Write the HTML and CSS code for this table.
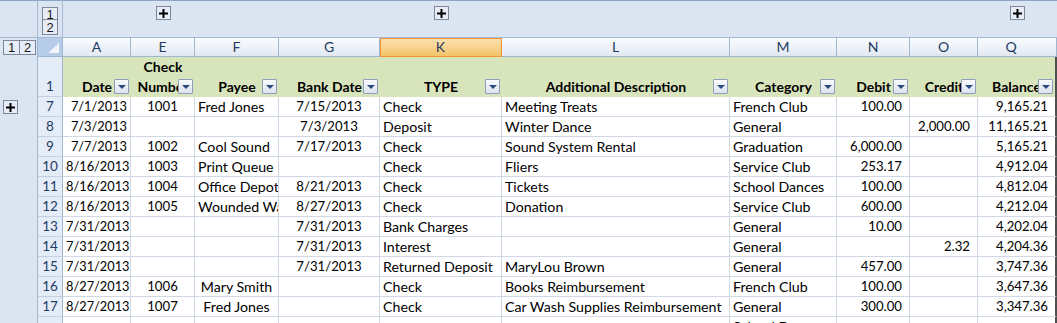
FILE: index.html
```html
<!DOCTYPE html>
<html>
<head>
<meta charset="utf-8">
<link rel="stylesheet" href="styles.css">
</head>
<body>
<div class="sheet">
  <!-- top outline band -->
  <div class="tb corner"></div>
  <div class="tb lvl"><div class="btn lv1">1</div><div class="btn lv2">2</div></div>
  <div class="tb grp"></div>
  <div class="tb grp"><div class="btn plus"><svg width="9" height="9" viewBox="0 0 9 9"><path d="M3.5 0h2v3.5H9v2H5.5V9h-2V5.5H0v-2h3.5z" fill="#000"/></svg></div></div>
  <div class="tb grp"></div>
  <div class="tb grp"></div>
  <div class="tb grp"><div class="btn plus"><svg width="9" height="9" viewBox="0 0 9 9"><path d="M3.5 0h2v3.5H9v2H5.5V9h-2V5.5H0v-2h3.5z" fill="#000"/></svg></div></div>
  <div class="tb grp"></div>
  <div class="tb grp"></div>
  <div class="tb grp"></div>
  <div class="tb grp"></div>
  <div class="tb grp"><div class="btn plus"><svg width="9" height="9" viewBox="0 0 9 9"><path d="M3.5 0h2v3.5H9v2H5.5V9h-2V5.5H0v-2h3.5z" fill="#000"/></svg></div></div>

  <!-- column headers -->
  <div class="ol lvrow"><div class="btn hl">1</div><div class="btn hl hl2">2</div></div>
  <div class="ch corner"></div>
  <div class="ch">A</div>
  <div class="ch">E</div>
  <div class="ch">F</div>
  <div class="ch">G</div>
  <div class="ch sel">K</div>
  <div class="ch">L</div>
  <div class="ch">M</div>
  <div class="ch">N</div>
  <div class="ch">O</div>
  <div class="ch qh">Q</div>

  <!-- header row 1 -->
  <div class="ol"></div>
  <div class="rh tall">1</div>
  <div class="hd"><span>Date</span><i class="dd"></i></div>
  <div class="hd"><span>Check Number</span><i class="dd"></i></div>
  <div class="hd"><span>Payee</span><i class="dd"></i></div>
  <div class="hd"><span>Bank Date</span><i class="dd"></i></div>
  <div class="hd"><span>TYPE</span><i class="dd"></i></div>
  <div class="hd"><span>Additional Description</span><i class="dd"></i></div>
  <div class="hd"><span>Category</span><i class="dd"></i></div>
  <div class="hd"><span>Debit</span><i class="dd"></i></div>
  <div class="hd"><span>Credit</span><i class="dd"></i></div>
  <div class="hd edge"><span>Balance</span><i class="dd"></i></div>

  <!-- row 7 -->
  <div class="ol"><div class="btn plus side"><svg width="9" height="9" viewBox="0 0 9 9"><path d="M3.5 0h2v3.5H9v2H5.5V9h-2V5.5H0v-2h3.5z" fill="#000"/></svg></div></div>
  <div class="rh">7</div>
  <div class="c r">7/1/2013</div><div class="c m d">1001</div><div class="c">Fred Jones</div><div class="c m d">7/15/2013</div>
  <div class="c">Check</div><div class="c">Meeting Treats</div><div class="c">French Club</div>
  <div class="c n">100.00</div><div class="c n"></div><div class="c n edge">9,165.21</div>

  <!-- row 8 -->
  <div class="ol"></div><div class="rh">8</div>
  <div class="c r">7/3/2013</div><div class="c m d"></div><div class="c"></div><div class="c m d">7/3/2013</div>
  <div class="c">Deposit</div><div class="c">Winter Dance</div><div class="c">General</div>
  <div class="c n"></div><div class="c n">2,000.00</div><div class="c n edge">11,165.21</div>

  <!-- row 9 -->
  <div class="ol"></div><div class="rh">9</div>
  <div class="c r">7/7/2013</div><div class="c m d">1002</div><div class="c">Cool Sound</div><div class="c m d">7/17/2013</div>
  <div class="c">Check</div><div class="c">Sound System Rental</div><div class="c">Graduation</div>
  <div class="c n">6,000.00</div><div class="c n"></div><div class="c n edge">5,165.21</div>

  <!-- row 10 -->
  <div class="ol"></div><div class="rh">10</div>
  <div class="c r">8/16/2013</div><div class="c m d">1003</div><div class="c">Print Queue</div><div class="c m d"></div>
  <div class="c">Check</div><div class="c">Fliers</div><div class="c">Service Club</div>
  <div class="c n">253.17</div><div class="c n"></div><div class="c n edge">4,912.04</div>

  <!-- row 11 -->
  <div class="ol"></div><div class="rh">11</div>
  <div class="c r">8/16/2013</div><div class="c m d">1004</div><div class="c">Office Depot</div><div class="c m d">8/21/2013</div>
  <div class="c">Check</div><div class="c">Tickets</div><div class="c">School Dances</div>
  <div class="c n">100.00</div><div class="c n"></div><div class="c n edge">4,812.04</div>

  <!-- row 12 -->
  <div class="ol"></div><div class="rh">12</div>
  <div class="c r">8/16/2013</div><div class="c m d">1005</div><div class="c">Wounded Warrior</div><div class="c m d">8/27/2013</div>
  <div class="c">Check</div><div class="c">Donation</div><div class="c">Service Club</div>
  <div class="c n">600.00</div><div class="c n"></div><div class="c n edge">4,212.04</div>

  <!-- row 13 -->
  <div class="ol"></div><div class="rh">13</div>
  <div class="c r">7/31/2013</div><div class="c m d"></div><div class="c"></div><div class="c m d">7/31/2013</div>
  <div class="c">Bank Charges</div><div class="c"></div><div class="c">General</div>
  <div class="c n">10.00</div><div class="c n"></div><div class="c n edge">4,202.04</div>

  <!-- row 14 -->
  <div class="ol"></div><div class="rh">14</div>
  <div class="c r">7/31/2013</div><div class="c m d"></div><div class="c"></div><div class="c m d">7/31/2013</div>
  <div class="c">Interest</div><div class="c"></div><div class="c">General</div>
  <div class="c n"></div><div class="c n">2.32</div><div class="c n edge">4,204.36</div>

  <!-- row 15 -->
  <div class="ol"></div><div class="rh">15</div>
  <div class="c r">7/31/2013</div><div class="c m d"></div><div class="c"></div><div class="c m d">7/31/2013</div>
  <div class="c">Returned Deposit</div><div class="c">MaryLou Brown</div><div class="c">General</div>
  <div class="c n">457.00</div><div class="c n"></div><div class="c n edge">3,747.36</div>

  <!-- row 16 -->
  <div class="ol"></div><div class="rh">16</div>
  <div class="c r">8/27/2013</div><div class="c m d">1006</div><div class="c m">Mary Smith</div><div class="c m d"></div>
  <div class="c">Check</div><div class="c">Books Reimbursement</div><div class="c">French Club</div>
  <div class="c n">100.00</div><div class="c n"></div><div class="c n edge">3,647.36</div>

  <!-- row 17 -->
  <div class="ol"></div><div class="rh">17</div>
  <div class="c r">8/27/2013</div><div class="c m d">1007</div><div class="c m">Fred Jones</div><div class="c m d"></div>
  <div class="c">Check</div><div class="c">Car Wash Supplies Reimbursement</div><div class="c">General</div>
  <div class="c n">300.00</div><div class="c n"></div><div class="c n edge">3,347.36</div>

  <!-- row 18 (cut off) -->
  <div class="ol"></div><div class="rh"></div>
  <div class="c r"></div><div class="c m d"></div><div class="c"></div><div class="c m d"></div>
  <div class="c"></div><div class="c"></div><div class="c">School Dances</div>
  <div class="c n"></div><div class="c n"></div><div class="c n edge"></div>
</div>
</body>
</html>
```
FILE: styles.css
```css
html, body {
  margin: 0;
  padding: 0;
  background: #ffffff;
  overflow: hidden;
}

body {
  font-family: Lato, "Liberation Sans", sans-serif;
  font-size: 14.2px;
  color: #000;
}

.sheet {
  display: grid;
  grid-template-columns: 38px 25px 68px 64px 84px 101px 122px 228px 107px 73px 68px 79px;
  grid-template-rows: 38px 19px 40px;
  grid-auto-rows: 20px;
  width: 1057px;
}

.sheet > div {
  box-sizing: border-box;
  min-width: 0;
}

/* top outline band */
.tb {
  background: #dbe5f1;
  border-top: 1px solid #8ea5c2;
  border-bottom: 1px solid #a5b9d3;
}

.tb.corner {
  border-right: 1px solid #a5b9d3;
}

.tb.lvl {
  border-right: 1px solid #a5b9d3;
  display: flex;
  flex-direction: column;
  align-items: center;
  padding-top: 6px;
}

.tb.grp {
  display: flex;
  justify-content: center;
  padding-top: 5px;
}

.btn {
  box-sizing: border-box;
  border: 1px solid #7c8899;
  background: #e6edf7;
  display: flex;
  align-items: center;
  justify-content: center;
  font-family: "Liberation Sans", Arial, sans-serif;
  font-size: 13px;
  color: #1a1a1a;
  line-height: 1;
}

.lv1 {
  width: 16px;
  height: 13px;
  padding-top: 1px;
}

.lv2 {
  width: 16px;
  height: 16px;
  margin-top: -1px;
}

.plus {
  width: 15px;
  height: 14px;
}

.plus.side {
  margin: 3px 0 0 3px;
}

/* outline column */
.ol {
  background: #dbe5f1;
  border-right: 1px solid #9eb6ce;
}

.ol.lvrow {
  display: flex;
  padding: 2px 0 0 3px;
}

.hl {
  width: 17px;
  height: 15px;
}

.hl2 {
  margin-left: -1px;
}

/* column headers */
.ch {
  background: linear-gradient(to bottom, #f9fbfd 0%, #eef2f8 50%, #e1e8f2 100%);
  border-right: 1px solid #9eb6ce;
  border-bottom: 1px solid #9eb6ce;
  color: #1f3b62;
  font-size: 14px;
  line-height: 18px;
  text-align: center;
}

.ch.corner {
  background:
    linear-gradient(135deg, transparent 50%, #f2f5fa 50%) right 3px bottom 3px / 10px 10px no-repeat,
    #b7cce9;
}

.ch.sel {
  background: linear-gradient(to bottom, #fbe2b2 0%, #f8d491 50%, #f2c267 100%);
  border-right-color: #f29436;
  border-bottom-color: #f29436;
  box-shadow: inset 1px 1px 0 #f29436;
}

.ch.qh {
  padding-right: 12px;
}

/* row headers */
.rh {
  background: #e4ecf7;
  border-right: 1px solid #9eb6ce;
  border-bottom: 1px solid #c3d1e3;
  color: #1f3b62;
  text-align: center;
  font-size: 13.5px;
  line-height: 19px;
}

.rh.tall {
  display: flex;
  align-items: flex-end;
  justify-content: center;
  line-height: 20px;
}

/* table header row */
.hd {
  position: relative;
  background: #d8e4bc;
  font-weight: bold;
  font-size: 14px;
  line-height: 20px;
  display: flex;
  align-items: flex-end;
  justify-content: center;
  text-align: center;
  overflow: hidden;
  white-space: normal;
}

.hd span {
  display: block;
}

.dd {
  position: absolute;
  right: 2px;
  bottom: 3px;
  width: 15px;
  height: 15px;
  box-sizing: border-box;
  border: 1px solid #8d9fba;
  border-radius: 1px;
  background: linear-gradient(to bottom, #f8fafc, #dce3ed);
}

.dd::after {
  content: "";
  position: absolute;
  left: 3px;
  top: 5px;
  border-left: 4px solid transparent;
  border-right: 4px solid transparent;
  border-top: 4px solid #2b4a7e;
}

/* data cells */
.c {
  background: #fff;
  border-right: 1px solid #d0d7e5;
  border-bottom: 1px solid #d0d7e5;
  padding: 0 3px;
  line-height: 19px;
  white-space: nowrap;
  overflow: hidden;
}

.c.r {
  text-align: right;
  font-size: 12.8px;
}

.c.m {
  text-align: center;
}

.c.d {
  font-size: 13.2px;
}

.c.n {
  text-align: right;
  padding-right: 7px;
  font-size: 13.2px;
}

.edge {
  border-right: 2px solid #4f4f4f !important;
}
```
